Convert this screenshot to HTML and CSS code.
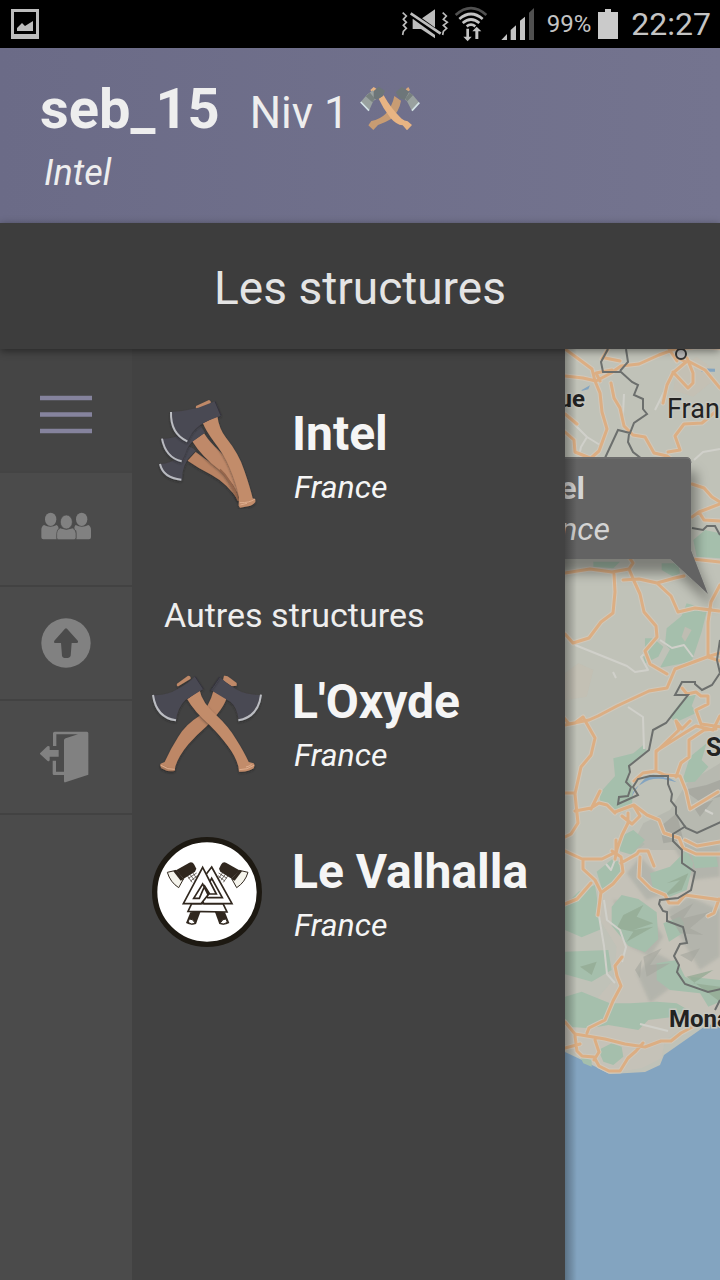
FILE: index.html
```html
<!DOCTYPE html>
<html lang="fr">
<head>
<meta charset="utf-8">
<meta name="viewport" content="width=device-width, initial-scale=1">
<title>Les structures</title>
<link rel="stylesheet" href="styles.css">
</head>
<body>
<div class="app">
  <div class="status">
    <svg class="status-shot" viewBox="0 0 28 30" aria-hidden="true"><path fill="#bdbdbd" fill-rule="evenodd" d="M0 0h28v30H0zM3 3v22h22V3z"/><path d="M3.500 3.500h21v21h-21z" fill="#000"/><path fill="#bdbdbd" d="M6 19l5-5 3 3 8-5v10H6z"/></svg>
    <div class="status-right">
      <svg class="status-icons" viewBox="36 18 402 108" aria-hidden="true">
        <g fill="none" stroke="#bdbdbd" stroke-width="5"><path d="M41 38l11 10-9 10 9 9-9 9 9 9-9 9-2 11"/><path d="M161 38l11 10-9 10 12 9-12 9 10 9-10 9-2 11"/></g>
        <path d="M71 57h25l42-29v87L96 87H71z" fill="#bdbdbd"/>
        <path d="M64 40l88 64" stroke="#000" stroke-width="18"/><path d="M65 40l90 61" stroke="#bdbdbd" stroke-width="8"/>
        <g fill="none" stroke="#c4c4c4" stroke-width="8"><path d="M200 45q46-41 92 0" stroke="#505050"/><path d="M211 57q35-30 70 0"/><path d="M221 69q25-21 50 0"/><path d="M233 79q13-10 26 0"/></g>
        <path fill="#c4c4c4" d="M232 86h8v24h8l-12 14-13-14h9zM259 117h9V94h9l-14-14-13 14h9z"/>
        <path fill="#c4c4c4" d="M337 120l17-18v18zM365 90l16-14v44h-16zM393 62l15-12v70h-15z"/><path fill="#505050" d="M420 38l15-14v96h-15z"/>
      </svg>
      <span class="status-percent">99%</span>
      <svg class="status-battery" viewBox="0 0 20 30" aria-hidden="true"><path fill="#cacaca" d="M7 0h6v3h7v27H0V3h7z"/></svg>
      <time class="status-time">22:27</time>
    </div>
  </div>

  <header class="profile">
    <div class="profile-line">
      <h1 class="profile-name">seb_15</h1>
      <span class="profile-level">Niv 1</span>
      <svg class="profile-axes" viewBox="360 45 180 141" aria-hidden="true">
        <path d="M463 78l20 14q-5 32-30 55-18 11-39 18l-14 15-15-14 9-13q26-5 43-22 20-22 26-53z" fill="#c89c73"/>
        <path d="M391 60l10-9 9 6-11 13z" fill="#e8b483"/><path d="M416 86l15-10q12 22 25 38 17 21 29 32 8 7 18 8l13 11-15 16-13-15q-19-2-37-23-22-28-35-57z" fill="#e8b483"/>
        <path d="M497 58l8-7 5 9-7 7z" fill="#d9a77c"/>
        <path d="M398 61l-17 13-19 22 25 26 13-29 17-11zM491 71l14-6 14 11 19 22-22 25-15-29-11-9z" fill="#99a19f"/>
        <path d="M401 63l15-13 19 12-7 17-15 9-12-2zM485 51l23 14-14 25-16-6-11-17z" fill="#6d7679"/>
        <path d="M390 68l-13 11 20 18 8-11zM509 68l10 8-17 18-7-7z" fill="#78817f"/>
        <path d="M362 96l25 26M538 98l-22 24" stroke="#d4e3e7" stroke-width="5"/>
      </svg>
    </div>
    <p class="profile-place">Intel</p>
  </header>

  <div class="titlebar"><h2 class="title">Les structures</h2></div>

  <div class="content">
    <nav class="rail" aria-label="Menu">
      <button class="rail-item rail-active" type="button" aria-label="Structures">
        <svg class="rail-icon" viewBox="0 0 52 52"><path d="M0 9h52M0 25.500h52M0 42h52" stroke="#85839d" stroke-width="4.500"/></svg>
      </button>
      <button class="rail-item" type="button" aria-label="Membres">
        <svg class="rail-icon" viewBox="119 489 156 156"><g fill="#818181"><ellipse cx="151" cy="538" rx="17" ry="20"/><ellipse cx="244" cy="538" rx="17" ry="20"/><path d="M131 555q19 10 38 0 5 3 6 10-6 4-6 33h-40q-6 0-6-6v-22q0-11 8-15zM226 555q19 10 38 0 8 4 8 15v22q0 6-6 6h-38V572q-6-2-6-9 1-6 4-8z"/><g stroke="#4b4b4b" stroke-width="2"><path d="M180 564q18 8 36 0 11 4 11 16v13q0 6-6 6h-46q-6 0-6-6v-13q0-12 11-16z"/><ellipse cx="198" cy="546" rx="18" ry="21"/></g></g></svg>
      </button>
      <button class="rail-item" type="button" aria-label="Niveau supérieur">
        <svg class="rail-icon" viewBox="119 80 156 156"><circle cx="197" cy="158" r="74" fill="#818181"/><path d="M194 115q3-3 6 0l33 37q2 6-4 6h-15l-3 38q-2 7-14 7-11 0-12-7l-3-38h-16q-7 0-4-7z" fill="#4b4b4b"/></svg>
      </button>
      <button class="rail-item" type="button" aria-label="Quitter">
        <svg class="rail-icon" viewBox="118 426 156 156"><g fill="#818181"><path d="M157 471v-38q0-5 5-5h97q4 0 4 5v124l-69 23q-4 1-4-4v-18h-30q-4 0-4-4v-39h10v33h24v-94q0-4 5-6l37-12h-65v35z"/><path d="M117 494l23-22q7-3 7 3v8h27v20h-27v10q-1 6-7 2z"/></g></svg>
      </button>
    </nav>

    <main class="panel">
      <a class="place" href="#intel">
        <svg class="place-icon" viewBox="21 27 330 330" aria-hidden="true">
          <defs><filter id="soft" x="-20%" y="-20%" width="140%" height="140%"><feDropShadow dx="0" dy="4" stdDeviation="3" flood-color="#222" flood-opacity=".55"/></filter></defs>
          <g filter="url(#soft)">
            <path d="M128 212l24-26q28 22 62 41 34 22 65 75l3 32q-35-54-83-80-40-20-71-42z" fill="#b98363"/>
            <path d="M152 182l-24 26-10 20q-7 18-7 41-25 2-43-14-18-16-22-33 30-3 48-16l33-35q10-4 25 11z" fill="#4a4852"/>
            <path d="M45 222q10 42 64 47" fill="none" stroke="#b8bac0" stroke-width="6"/>
          </g>
          <g filter="url(#soft)">
            <path d="M142 154l35-24q16 26 45 52 52 46 61 115l2 36q-10-50-60-92-54-40-83-87z" fill="#bf8969"/>
            <path d="M225 238q30 25 55 94" fill="none" stroke="#96664c" stroke-width="5"/>
            <path d="M180 128l-39 28q-16 18-19 32l-12 27q-48-8-61-68 40-2 61-14l52-33z" fill="#4a4852"/>
            <path d="M51 146q11 57 59 68" fill="none" stroke="#b8bac0" stroke-width="6"/>
          </g>
          <g filter="url(#soft)">
            <path d="M174 100l43-21q5 37 25 63 40 50 56 100 18 52 25 83l8 3v8q-7 10-22 13l-24 4-4-6 1-27q-8-40-29-89-12-32-48-79-22-29-31-52z" fill="#c28c6b"/>
            <path d="M284 338q30 1 46-11M286 345l20-5" fill="none" stroke="#dfae8d" stroke-width="3"/>
            <path d="M153 48l39-18q8 3 4 13l-39 16q-7-5-4-11z" fill="#bf8968"/>
            <path d="M77 66q43-3 83-13l50-19 18 43-36 14q-36 16-51 38-9 17-14 26-31-10-41-35-13-25-9-54z" fill="#4a4852"/>
            <path d="M210 34l18 43" stroke="#34333d" stroke-width="3"/>
            <path d="M78 66q-2 65 49 88" fill="none" stroke="#bbbdc2" stroke-width="6"/>
          </g>
        </svg>
        <span class="place-text"><strong class="place-name">Intel</strong><em class="place-country">France</em></span>
      </a>

      <h3 class="section">Autres structures</h3>

      <div class="places">
        <a class="place" href="#oxyde">
          <svg class="place-icon" viewBox="21 6 330 330" aria-hidden="true">
            <g filter="url(#soft)">
              <path d="M206 76l39 23q-7 22-28 48-14 21-34 38-29 25-53 53-29 35-39 66l-2 14q-22 4-40-8l-4-9 2-5 12-5q19-42 41-76 24-38 62-61 31-28 44-78z" fill="#bd8766"/>
              <path d="M237 32q10-1 18 7l20 15v8l-15 2-26-18z" fill="#bf8968"/>
              <path d="M224 36l-27 39 60 36q20 16 24 55 56-11 67-76-44 1-75-17-28-17-49-37z" fill="#4a4852"/>
              <path d="M348 89q-8 67-68 77" fill="none" stroke="#bbbdc2" stroke-width="6"/>
            </g>
            <g filter="url(#soft)">
              <path d="M127 103l37-27q6 36 50 75 35 32 60 73 23 36 37 67l15 4 3 6-3 9q-18 12-44 10l-2-16q-8-30-31-60-20-29-56-65-46-40-66-76z" fill="#c28c6b"/>
              <path d="M48 301q20 14 41 12M327 301q-20 14-44 13M303 306q10-2 17-8" fill="none" stroke="#dfae8d" stroke-width="3"/>
              <path d="M96 56l33-24q9 0 8 9l-37 23q-6 0-4-8z" fill="#bf8968"/>
              <path d="M150 34l25 38-54 33q-24 24-28 62-58-10-71-77 43 3 76-18 31-15 52-38z" fill="#4a4852"/>
              <path d="M150 34l25 38M198 74l26-38" stroke="#34333d" stroke-width="3"/>
              <path d="M24 90q10 68 69 76" fill="none" stroke="#bbbdc2" stroke-width="6"/>
            </g>
          </svg>
          <span class="place-text"><strong class="place-name">L'Oxyde</strong><em class="place-country">France</em></span>
        </a>
        <a class="place" href="#valhalla">
          <svg class="place-icon" viewBox="21 21 330 330" aria-hidden="true">
            <circle cx="186" cy="186" r="157" fill="#fff" stroke="#1d1912" stroke-width="16"/>
            <g id="half"><path d="M136 247l31-3-14 38q-15 6-30-3z" fill="#30271e"/><path d="M133 267q10-2 18 13-12 5-22-3z" fill="#fff" stroke="#30271e" stroke-width="3"/>
              <path d="M93 121l40-23q9-4 15 6l6 12-4 9-34 21z" fill="#30271e"/>
              <path d="M67 127l26-6 12 22q8 4 11 3l-15 27q-25-16-34-46z" fill="#f5f4ec" stroke="#30271e" stroke-width="3"/>
              <path d="M94 120l23 27-10 5-22-28z" fill="#30271e"/>
              <path d="M127 137l14 20M135 133l13 18M143 128l12 17M130 145l25-16M137 153l20-16" stroke="#30271e" stroke-width="2"/></g>
            <use href="#half" transform="matrix(-1 0 0 1 376 0)"/>
            <g fill="#fff" stroke="#30271e" stroke-width="5" stroke-linejoin="miter">
              <path d="M140 221l-11 23 117 2-12-25z"/>
              <path d="M200 111l61 110h-84l-9-14 10-17 10 13h44l-32-58-14 27-14-24z"/>
              <path d="M173 112l41 80h-26l-15-30-27 43h17l16-37 14 22-25 31h-53z"/>
            </g>
          </svg>
          <span class="place-text"><strong class="place-name">Le Valhalla</strong><em class="place-country">France</em></span>
        </a>
      </div>
    </main>

    <section class="map" aria-label="Carte">
      <svg class="map-art" viewBox="565 349 155 931" preserveAspectRatio="xMinYMin slice">
        <defs>
          <filter id="blur"><feGaussianBlur stdDeviation="5"/></filter>
          <filter id="bubble" x="-30%" y="-30%" width="160%" height="170%"><feDropShadow dx="6" dy="14" stdDeviation="6" flood-color="#000" flood-opacity=".35"/></filter>
        </defs>
        <path d="M565 349h600v931H565z" fill="#c0c2b8"/>
        <path d="M565 1052l17 8 28 14 35-2 15-7 4-10 40-28 20-7v260H565z" fill="#83a4c0"/>

        <g transform="translate(560 840) scale(.3333)">
          <path d="M190 0h290v550h-90l-75 50-10 55-60 30-100 15-90-50-40-40V560l75-60 70-80 10-100-50-80 0-80z" fill="#c5c2b8" opacity=".8"/>
          <g fill="#aeb0a8" filter="url(#blur)" opacity=".75"><path d="M200 100l40-50 60 60 20 50-60 20zM320 210l70-40 90 40v140l-60 40-60-100zM230 400l60-60 40 20 20 70-80 60zM340 20l80-20 60 20v90l-80 10zM160 180l90 10 60 100-40 60-60-30z"/></g>
          <g fill="#a5bfac">
            <path d="M180 0h60l15 12-40 32-35-10zM110 95l50-40 30 20-20 55-40 30zM105 135l-50 20-40 40v75l50 22 60-25zM155 200l30-35 50 12 55 40 5 80-40 40-50-20-50-60zM15 335l130-5 10 60-60 35-80-22zM15 470l50-15 85 35 60 0 80-5 60 5 35 20-40 20-80 10-30 30-90-15-55 10-70-5-60-20zM115 630l40-20 30 10 5 30-30 25-30-10zM310 250l50-20 12 20-5 30-40 25zM270 100l60-20 50-50 20 40-20 80-50 20-50-20zM390 410l90 10v65l-35 15zM395 45l70-10 10 45-70 5zM290 370l60-10 25 50 65 30-20 20-90-10-40-30zM60 650l35 10v20l-25-10z"/>
          </g>
          <path d="M190 225l60-30-20 35 50 20-60 20 60-10-80 45 20-30-50-10zM60 380l50-15-15 40zM385 100l-65 30 40-10-50 50 55-20zM380 410l80-20-60 40 80 10v45z" fill="#93a993" opacity=".75"/>
          <path d="M330 230l70-40-30 45 80-20-60 50 40 20-70-5zM250 350l55-25-35 50 60-5-70 40zM360 345l60-20-25 40zM225 390l20-30-5 55z" fill="#a3a59c" opacity=".6"/>
        </g>

        <g transform="translate(560 610) scale(.3333)">
          <path d="M330 600l50-80 100-60v260H210l40-80z" fill="#b3b5ac" opacity=".7"/>
          <path d="M370 540l70-15 40-15v50l-60 15zM300 650l50-40 20 80-60 10zM400 590l60-20-40 50z" fill="#a1a39b" opacity=".7"/>
          <path d="M15 190l40-30 45 20-20 80-65 10z" fill="#c6beb0" opacity=".5"/>
          <g fill="#a5bfac"><path d="M320 55l60-50 60 0-15 60-30 90-95 18 30-55-15-15zM255 120v-35l25 0 30 25-15 30-40 20-5-20zM160 445l60-15 30-25 10 18-50 40-5 40 15 30-5 60-35 15-60-30v-30l45-50zM375 260l35-12-15 40 15 20-65 30-15-20zM390 440l50-40-15 50 20 20-40 45-40 3zM180 680l40-20 35 30-30 30h-45z"/></g>
          <path d="M375 50l20 10-20 35-10-15z" fill="#bebdb2"/>
          <path d="M215 560q40-70 70-65 30-3 65 22l-40-10q-40-5-65 15-25 10-30 38z" fill="#83a4c0"/>
        </g>
        <g transform="translate(560 340) scale(.3333)">
          <path d="M350 90l60-40 40 30v50l-50 40-60-20z" fill="#c6beb0" opacity=".6"/>
          <path d="M400 600l35-30 45 10v75l-70-5zM100 665h80l-20 20-60-5zM305 670h50l5 30-20 10-35-20zM380 790l50 15-10 35h-60z" fill="#a5bfac"/>
          <path d="M420 85l45 1v9h-40zM65 150l25-14-5 12-20 5z" fill="#83a4c0"/>
        </g>

        <g fill="none" stroke="#d0d0ca" stroke-width="2" stroke-linejoin="round">
          <path d="M573 423l14 14-6 10-2 9M587 437l13 8M624 394l-1 20M655 410l9-18M694 460l9-8 17-3M575 645l52 21 8 6 13-2-7-13 7-7M660 640l12 8 12-3 9 12M613 672l3 6M628 707l15 10 1 32M604 900l3 20 13 10 6 17-4 15M599 916l5 30 3 28 8 9M640 1024l28 7M705 810l8 4M606 864l5 6 5-13"/>
        </g>
        <g class="road-casing">
          <path id="road-lines" d="M565 349l19 14 8 6 3 12 5 12 2 19 5 17-8 22-8 7M565 376l18 2 13 3 15-8 10-7 18-2 20-9 16-6 25-2 20 1M611 383l3 15 6 10 4 18 9 9 12 2 9 16 13 3 12 9M600 381l-4-8 16-3M608 349l-6 10M605 358l15 3M565 414l12 10M565 432l9 8 1 12 15 6M720 408l-18 15-18 1-9 12 5 14-12 2M680 359l6 3-13 11-6 12-4 18M669 349l8 12M687 358l6 15v10l-5 5-15-16M688 361l17 9 15 18M692 484l12 4 8 9 8 5M720 504l-21 8-7 5M699 512l5 8 16 1M692 559l28 3
          M565 573l25-4 22 3 17-3 4-6-4-6M614 574l1 18-2 21-12 9-12 16-16 5-8-9M623 580l16-1 18 4 18-5 9-2M629 569l5 12 6 13 4 18 12 14 1 11-12 14 5 13 17 10M657 583l14 13 7 16 17-4 24 3M720 585l-9 17-3 20 0 35 12 4M720 653l-13 4-32 12-8 19-18 3-32 15-19 10-9 4-20 4-10-12-6-4v-55M565 725l10-2 8-6 12 21-4 17-10 12-6 27 3 29-7 11-6 3M575 811l16-3 8-5 8 2 8 8M591 809l9-18M565 793h10M615 812l19-7 13 10 12 5 5 13 15 5 4 10 13 6h24M628 813l0 10-6 12-5 14-2 10M634 806l6 10-8 8-10-8
          M634 781l9-8 13-2 9 4 15 1 6 15 4 18 28-17M656 771v-20l30-19 10-6 17 4 7-14M657 751l22-21-3-9 6 8 8-8M682 688l5 6 9-2 5 4h7v8l-12 6 5 14 20 3M676 777l5-14 8-6v-17l15-10 12-1
          M565 851l17 8h20l14-7V840M583 860v9l12 11 6 12-3 23M602 892l11-8 10-12-2-15-9-6M621 863l16-9 2-3h9l6 15M640 857l-1 20 12 12 14 6 4 8h9l7-8 36 5M719 899l-5 14-6 3M565 904l12-5 14-16M685 840l12 6 23-4M622 957l-7 9 2 10 4 10-8 15-8 19-16 8-2 5M565 1022l10 12 30 5 20 5 20 3 16-6h10l10-8 15-8M575 1036l2 15 5 5 12 1 5 9 10 5h11l8-13 8-7 7-8M595 1040l4 12-5 8M565 1048l15-4"/>
        </g>
        <use href="#road-lines" class="road-core"/>
        <g fill="none" stroke="#6c6f6d" stroke-width="2" stroke-linejoin="miter">
          <path d="M608 349l-7 13 2 10h18l11 10 6 3-4 10 9 4v10l4 5-13 9-4 10-12-3-13 28M629 434l-1 8 5 10 9 7M620 371l8-9-2-13M692 528l11 2 4-4h8l5 9M720 640l-3 20 3 13-8 12-10 5-7-6v-2h-13l-7 13h13l-22 28-13 7-4 20-20 16 1 6-4 10 5 5-3 9-9 1-1 7 20-9-5-8 5-8 12-3h18v8l4 10-1 7 5 6v7l10 14 11 5 24-11M686 826l-13 8v7l9 9v13l13 9-4 18-13 8-18 2-1 4 4 7 4 1v9l16 6 4 16-7 1-6 12 5 9-2 7 8 12 23 8 13-3M720 1000l-5 10"/>
        </g>
        <circle cx="681" cy="354" r="5" fill="#bbb" stroke="#333" stroke-width="2"/>

        <g class="map-label"><text x="585" y="407" font-size="24" font-weight="700" text-anchor="end">Belgique</text><text x="667" y="418" font-size="27">Francfort</text><text x="706" y="756" font-size="25" font-weight="700">Suisse</text><text x="669" y="1027" font-size="24" font-weight="700">Monaco</text></g>
        <g filter="url(#bubble)"><path d="M400 457h286q5 0 5 5v88l17 44-38-35H400z" fill="#646464"/></g>
        <path d="M565 458h121q5 0 5 5" fill="none" stroke="#777" stroke-width="1"/>
        <g class="map-bubble"><text x="585" y="499" font-size="32" font-weight="700" text-anchor="end">Intel</text><text x="610" y="540" font-size="32" font-style="italic" text-anchor="end">France</text></g>
      </svg>
    </section>
  </div>
</div>
</body>
</html>
```
FILE: styles.css
```css
* { box-sizing: border-box; margin: 0; padding: 0; }
body { font-family: Roboto, "Liberation Sans", sans-serif; color: #eee; background: #424242; }
svg { display: block; flex: none; }
.app { display: flex; flex-direction: column; min-height: 100vh; }

.status { display: flex; align-items: center; justify-content: space-between; height: 48px; padding: 0 9px 0 11px; background: #000; color: #c4c4c4; }
.status-shot { width: 28px; height: 30px; }
.status-right { display: flex; align-items: center; }
.status-icons { width: 134px; height: 36px; }
.status-percent { margin-left: 12px; font-size: 24px; line-height: 48px; }
.status-battery { width: 20px; height: 30px; margin: 0 13px 0 7px; }
.status-time { font-size: 32px; line-height: 48px; }

.profile { padding: 25px 40px 26px; background: linear-gradient(90deg, #6b6b87, #74748f); }
.profile-line { display: flex; align-items: baseline; }
.profile-name { font-size: 56px; line-height: 72px; font-weight: 700; }
.profile-level { margin-left: 30px; font-size: 44px; line-height: 72px; }
.profile-axes { width: 60px; height: 47px; margin-left: 11px; align-self: flex-start; margin-top: 12px; }
.profile-place { padding-left: 4px; font-size: 36px; line-height: 48px; font-style: italic; }

.titlebar { position: relative; z-index: 1; padding: 35px 20px 31px; background: #3d3d3d; box-shadow: 0 2px 8px rgba(0, 0, 0, .45); text-align: center; }
.title { font-size: 46px; line-height: 60px; font-weight: 400; color: #e4e4e4; }

.content { display: flex; flex: 1; }
.rail { flex: none; width: 132px; background: #4b4b4b; }
.rail-item { display: flex; align-items: center; justify-content: center; width: 100%; height: 114px; border: 0; border-bottom: 2px solid #424242; background: #4b4b4b; }
.rail-active { height: 124px; padding-top: 10px; background: #454545; border-color: #444; }
.rail-icon { width: 52px; height: 52px; }

.panel { flex: none; width: 433px; padding: 50px 20px; background: #424242; }
.place { display: flex; align-items: flex-start; gap: 30px; height: 112px; color: #f5f5f5; text-decoration: none; }
.place-icon { width: 110px; height: 110px; }
.place-text { display: flex; flex-direction: column; padding-top: 7px; white-space: nowrap; }
.place-name { font-size: 48px; line-height: 56px; font-weight: 700; }
.place-country { padding-left: 2px; font-size: 32px; line-height: 50px; font-style: italic; }
.section { margin: 84px 0 32px; padding-left: 12px; font-size: 34px; line-height: 40px; font-weight: 400; }
.places { display: flex; flex-direction: column; gap: 58px; }

.map { position: relative; flex: 1; min-width: 0; overflow: hidden; background: #83a4c0; }
.map::before { content: ""; position: absolute; inset: 0 auto 0 0; width: 12px; background: linear-gradient(90deg, rgba(0, 0, 0, .3), transparent); }
.map-art { width: 100%; height: 100%; }
.map-label { fill: #222; stroke: #c6c7bf; stroke-width: 3px; paint-order: stroke; }
.map-bubble { fill: #d4d4d4; }
.road-casing { fill: none; stroke: #d0c8bb; stroke-width: 5px; stroke-linejoin: round; stroke-linecap: round; }
.road-casing path { stroke-width: inherit; }
.road-core { fill: none; stroke: #dcae83; stroke-width: 3px; stroke-linejoin: round; stroke-linecap: round; }
#road-lines { stroke-width: inherit; }
```
